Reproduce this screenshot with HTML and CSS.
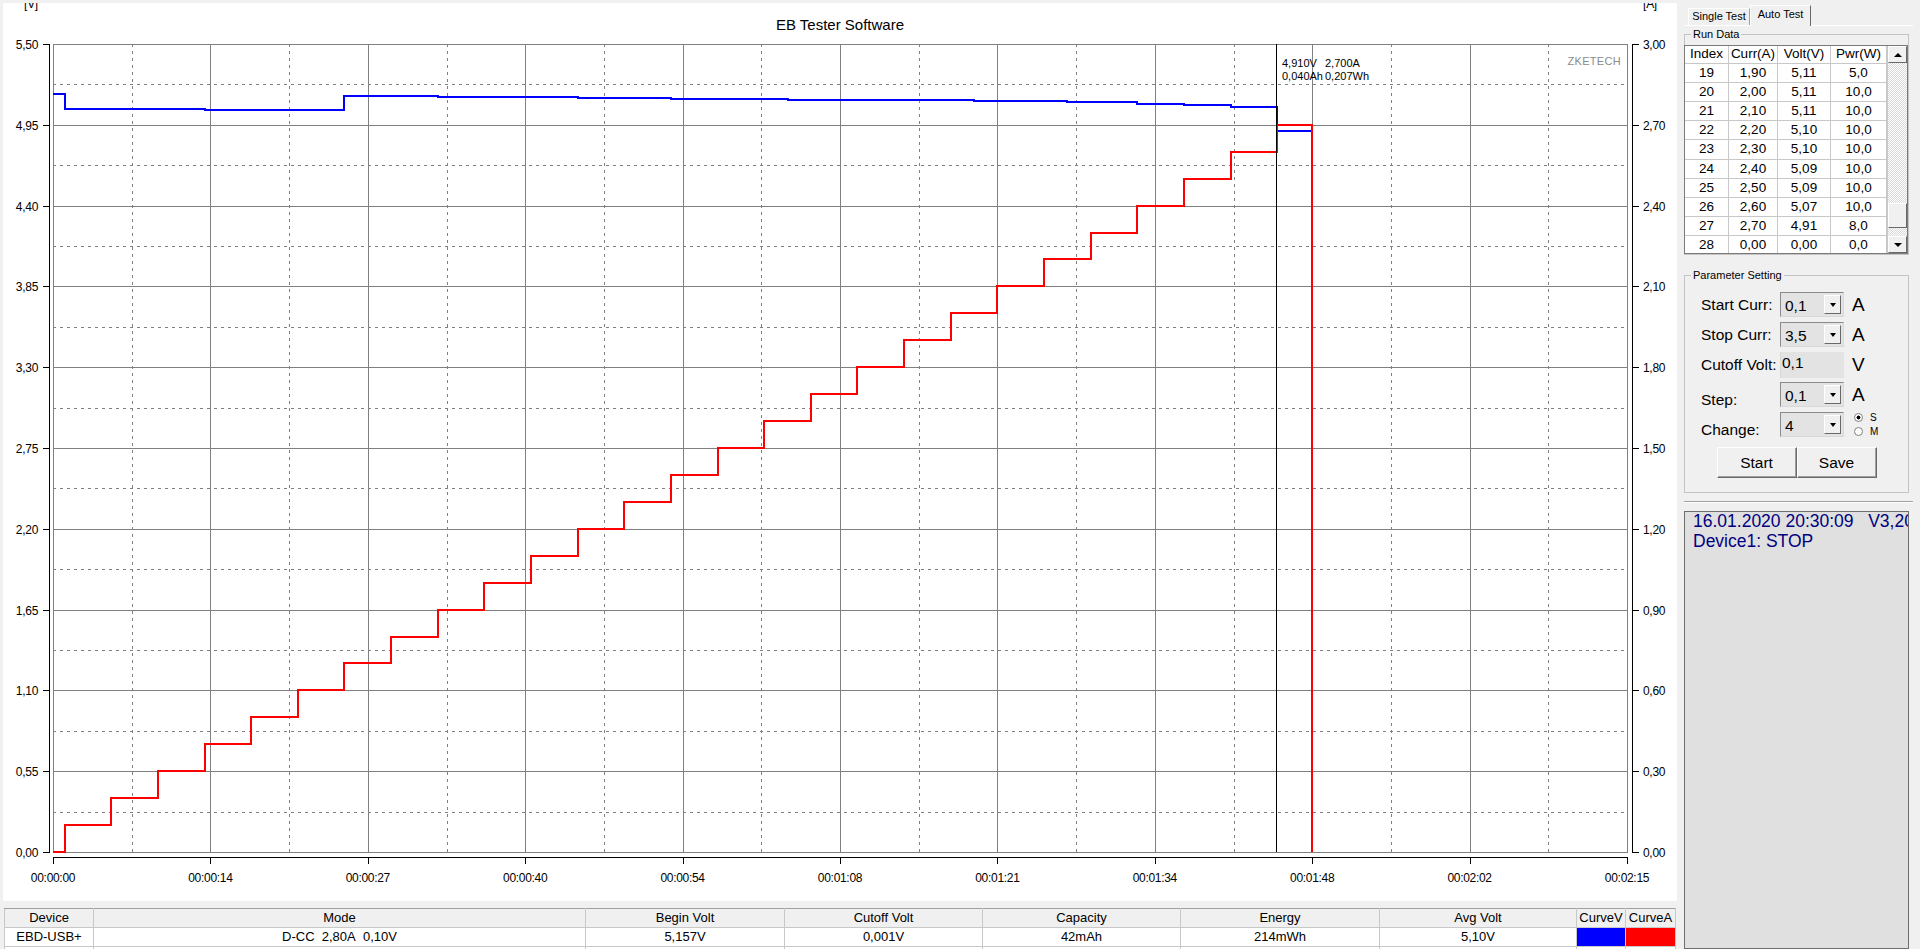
FILE: index.html
```html
<!doctype html>
<html>
<head>
<meta charset="utf-8">
<title>EB Tester Software</title>
<link rel="stylesheet" href="styles.css">
</head>
<body>
<div class="app">

  <!-- chart + summary -->
  <div class="main">
    <div class="chart">
      <svg id="plot" width="1674" height="898" viewBox="3 3 1674 898"></svg>
    </div>

    <table class="summary">
      <colgroup>
        <col style="width:89px"><col style="width:492px"><col style="width:199px">
        <col style="width:198px"><col style="width:198px"><col style="width:199px">
        <col style="width:197px"><col style="width:49px"><col style="width:50px">
      </colgroup>
      <tr>
        <th>Device</th><th>Mode</th><th>Begin Volt</th><th>Cutoff Volt</th><th>Capacity</th>
        <th>Energy</th><th>Avg Volt</th><th>CurveV</th><th>CurveA</th>
      </tr>
      <tr>
        <td>EBD-USB+</td><td>D-CC&nbsp; 2,80A&nbsp; 0,10V</td><td>5,157V</td><td>0,001V</td><td>42mAh</td>
        <td>214mWh</td><td>5,10V</td><td class="cv"></td><td class="ca"></td>
      </tr>
      <tr>
        <td></td><td></td><td></td><td></td><td></td><td></td><td></td><td></td><td></td>
      </tr>
    </table>
  </div>

  <!-- right hand panel -->
  <aside class="side">
    <div class="tabs">
      <span class="tab">Single Test</span>
      <span class="tab on">Auto Test</span>
    </div>

    <fieldset class="group run">
      <legend>Run Data</legend>
      <div class="datagrid">
        <table class="runtable">
          <colgroup><col style="width:44px"><col style="width:49px"><col style="width:53px"><col style="width:56px"></colgroup>
          <tr class="hd"><td>Index</td><td>Curr(A)</td><td>Volt(V)</td><td>Pwr(W)</td></tr>
          <tr><td>19</td><td>1,90</td><td>5,11</td><td>5,0</td></tr>
          <tr><td>20</td><td>2,00</td><td>5,11</td><td>10,0</td></tr>
          <tr><td>21</td><td>2,10</td><td>5,11</td><td>10,0</td></tr>
          <tr><td>22</td><td>2,20</td><td>5,10</td><td>10,0</td></tr>
          <tr><td>23</td><td>2,30</td><td>5,10</td><td>10,0</td></tr>
          <tr><td>24</td><td>2,40</td><td>5,09</td><td>10,0</td></tr>
          <tr><td>25</td><td>2,50</td><td>5,09</td><td>10,0</td></tr>
          <tr><td>26</td><td>2,60</td><td>5,07</td><td>10,0</td></tr>
          <tr><td>27</td><td>2,70</td><td>4,91</td><td>8,0</td></tr>
          <tr><td>28</td><td>0,00</td><td>0,00</td><td>0,0</td></tr>
        </table>
        <div class="vscroll">
          <div class="sbtn up"></div>
          <div class="track"><div class="thumb"></div></div>
          <div class="sbtn down"></div>
        </div>
      </div>
    </fieldset>

    <fieldset class="group params">
      <legend>Parameter Setting</legend>
      <div class="pbody">
        <div class="prow">
          <label>Start Curr:</label>
          <div class="combo"><span>0,1</span><i></i></div>
          <b class="unit">A</b>
        </div>
        <div class="prow">
          <label>Stop Curr:</label>
          <div class="combo"><span>3,5</span><i></i></div>
          <b class="unit">A</b>
        </div>
        <div class="prow">
          <label>Cutoff Volt:</label>
          <div class="field">0,1</div>
          <b class="unit">V</b>
        </div>
        <div class="prow">
          <label class="low">Step:</label>
          <div class="combo"><span>0,1</span><i></i></div>
          <b class="unit">A</b>
        </div>
        <div class="prow">
          <label class="low">Change:</label>
          <div class="combo"><span>4</span><i></i></div>
          <div class="radios">
            <span class="radio on"><i></i>S</span>
            <span class="radio"><i></i>M</span>
          </div>
        </div>
        <div class="btns">
          <button>Start</button><button>Save</button>
        </div>
      </div>
    </fieldset>

    <div class="sep"></div>

    <div class="status">
      <div>16.01.2020 20:30:09&nbsp;&nbsp;&nbsp;V3,20</div>
      <div>Device1: STOP</div>
    </div>
  </aside>
</div>

<script>
(() => {

  const svg  = document.getElementById("plot");
  const L = 53, R = 1627, T = 44, B = 852;      // plot frame
  const TMAX = 135;                             // seconds on x axis

  const X  = t => L + t / TMAX * (R - L);
  const YV = v => T + (5.5 - v) / 5.5 * (B - T);
  const YA = a => B - a / 3 * (B - T);
  const h  = n => Math.round(n) + 0.5;          // crisp 1px lines

  const vLab = ["5,50","4,95","4,40","3,85","3,30","2,75","2,20","1,65","1,10","0,55","0,00"];
  const aLab = ["3,00","2,70","2,40","2,10","1,80","1,50","1,20","0,90","0,60","0,30","0,00"];
  const tLab = ["00:00:00","00:00:14","00:00:27","00:00:40","00:00:54","00:01:08",
                "00:01:21","00:01:34","00:01:48","00:02:02","00:02:15"];

  let g = "";

  /* ---------- grid: 20 half steps, odd ones dashed ------------------ */
  for (let i = 1; i < 20; i++){
    const y = h(T + i * (B - T) / 20);
    const x = h(L + i * (R - L) / 20);
    const c = i % 2 ? "gd" : "gl";
    g += `<line class="${c}" x1="${L}" x2="${R}" y1="${y}" y2="${y}"/>`;
    g += `<line class="${c}" x1="${x}" x2="${x}" y1="${T}" y2="${B}"/>`;
  }
  g += `<rect class="gl" x="${L + .5}" y="${T + .5}" width="${R - L}" height="${B - T}"/>`;

  /* ---------- axes, ticks, labels ----------------------------------- */
  g += `<path class="axis" d="M49.5 ${T}V${B + 1}M1632.5 ${T}V${B + 1}M${L} 857.5H${R + 1}"/>`;
  for (let i = 0; i <= 10; i++){
    const y = T + i * (B - T) / 10;
    const x = L + i * (R - L) / 10;
    g += `<path class="axis" d="M43 ${h(y)}H50M1632 ${h(y)}H1639M${h(x)} 857V864"/>`;
    g += `<text class="lab" x="38" y="${Math.round(y) + 5}" text-anchor="end">${vLab[i]}</text>`;
    g += `<text class="lab" x="1643" y="${Math.round(y) + 5}">${aLab[i]}</text>`;
    g += `<text class="lab" x="${x}" y="882" text-anchor="middle">${tLab[i]}</text>`;
  }
  g += `<text class="lab" x="31" y="8" text-anchor="middle">[V]</text>`;
  g += `<text class="lab" x="1650" y="8" text-anchor="middle">[A]</text>`;
  g += `<text class="title" x="840" y="30" text-anchor="middle">EB Tester Software</text>`;
  g += `<text class="mark" x="1621" y="65" text-anchor="end">ZKETECH</text>`;

  /* ---------- measured curves --------------------------------------- */
  const END  = 108;
  const volt = [[0,5.157],[1,5.060],[13,5.053],[25,5.148],[33,5.141],[45,5.134],[53,5.128],
                [63,5.121],[73,5.117],[79,5.110],[87,5.103],[93,5.093],[97,5.086],
                [101,5.073],[105,4.910]];
  const amp  = [[0,0]];
  for (let k = 1; k <= 27; k++) amp.push([1 + 4 * (k - 1), k / 10]);

  function stepPath(pts, Y){
    let d = `M${Math.round(X(pts[0][0]))} ${Math.round(Y(pts[0][1]))}`;
    for (let i = 1; i < pts.length; i++)
      d += `H${Math.round(X(pts[i][0]))}V${Math.round(Y(pts[i][1]))}`;
    return d + `H${Math.round(X(END))}`;
  }

  g += `<path class="curv" d="${stepPath(volt, YV)}"/>`;
  g += `<path class="cura" d="${stepPath(amp, YA)}V${B}"/>`;

  /* ---------- cursor ------------------------------------------------- */
  const cx = Math.round(X(105)) - .5;
  g += `<line class="cursor" x1="${cx}" x2="${cx}" y1="${T}" y2="${B}"/>`;
  g += `<text class="info" x="1282" y="67">4,910V</text><text class="info" x="1325" y="67">2,700A</text>`;
  g += `<text class="info" x="1282" y="80">0,040Ah</text><text class="info" x="1325" y="80">0,207Wh</text>`;

  svg.innerHTML = g;

})();
</script>
</body>
</html>
```

FILE: styles.css
```css
/* ---------- page ---------- */
*{box-sizing:border-box}
html,body{margin:0;height:100%;overflow:hidden}
body{
  background:#f0f0f0;
  font:13px "Liberation Sans",Arial,sans-serif;
  color:#000;
}
.app{display:flex;width:1920px;height:949px}

/* ---------- left: chart + summary ---------- */
.main{width:1677px;padding:3px 0 0 3px}
.chart{height:898px;background:#fff}
.chart svg{display:block}

#plot line,#plot path,#plot rect{shape-rendering:crispEdges}
#plot text{font-family:"Liberation Sans",Arial,sans-serif}
.gl   {stroke:#808080;fill:none}
.gd   {stroke:#808080;stroke-dasharray:3 4}
.axis {stroke:#000;fill:none}
.curv {stroke:#0000ff;stroke-width:2;fill:none}
.cura {stroke:#ff0000;stroke-width:2;fill:none}
.cursor{stroke:#000}
.lab  {font-size:12px;letter-spacing:-.3px;fill:#000}
.title{font-size:15px;fill:#000}
.mark {font-size:11px;fill:#8a8a8a;letter-spacing:.3px}
.info {font-size:11px;fill:#000}

.summary{
  border-collapse:collapse;table-layout:fixed;
  width:1671px;margin:7px 0 0 1px;background:#fff;
}
.summary th,.summary td{
  border:1px solid #c8c8c8;padding:0;height:19px;
  line-height:18px;text-align:center;font-weight:normal;
  white-space:nowrap;overflow:hidden;
}
.summary th{background:#f0f0f0;border-top-color:#a0a0a0}
.summary .cv{background:#0000ff}
.summary .ca{background:#ff0000}

/* ---------- right panel ---------- */
.side{width:229px;margin-left:7px;display:flex;flex-direction:column}

.tabs{
  display:flex;align-items:flex-end;height:26px;
  padding-left:4px;border-bottom:1px solid #fff;
}
.tab{
  width:62px;height:17px;font-size:11px;line-height:14px;text-align:center;
  border:1px solid #fff;border-bottom:0;border-right-color:#a0a0a0;
}
.tab.on{
  width:61px;height:21px;margin-bottom:-1px;line-height:17px;
  background:#f0f0f0;border-right-color:#696969;
}

/* group boxes */
.group{
  margin:0;padding:0;width:225px;min-width:0;
  border:1px solid #c4c4c4;
}
.group legend{
  margin-left:6px;padding:0 2px;
  font-size:11px;line-height:12px;
}
.run{margin-top:2px}
.params{margin-top:14px}

/* run data grid */
.datagrid{
  display:flex;width:224px;height:209px;margin:5px 0 0 -1px;
  border:1px solid #7a7a7a;background:#fff;overflow:hidden;
}
.runtable{border-collapse:separate;border-spacing:0;table-layout:fixed;width:202px;align-self:flex-start}
.runtable td{
  padding:0;text-align:center;line-height:18.2px;font-size:13.5px;
  border-right:1px solid #c8c8c8;border-bottom:1px solid #c8c8c8;
  white-space:nowrap;
}
.runtable .hd td{line-height:16.5px}

.vscroll{width:20px;display:flex;flex-direction:column;border-left:1px solid #c8c8c8}
.sbtn{
  height:17px;display:flex;align-items:center;justify-content:center;
  background:#f0f0f0;border:1px solid;border-color:#fff #696969 #696969 #fff;
}
.sbtn::after{content:"";border:4px solid transparent}
.sbtn.up::after  {border-bottom:4px solid #000;border-top:0}
.sbtn.down::after{border-top:4px solid #000;border-bottom:0}
.track{
  flex:1;display:flex;flex-direction:column;justify-content:flex-end;padding-bottom:8px;
  background:repeating-conic-gradient(#fff 0 25%,#d8d8d8 0 50%) 0 0/2px 2px;
}
.thumb{height:25px;background:#f0f0f0;border:1px solid;border-color:#fff #696969 #696969 #fff}

/* parameter setting */
.pbody{padding:11px 0 14px 16px}
.prow{display:flex;align-items:center;height:25px;margin-bottom:5px}
.prow label{width:79px;font-size:15.5px;white-space:nowrap}
.prow label.low{padding-top:11px}

.combo{
  display:flex;width:64px;height:25px;padding:2px;background:#e3e3e3;
  border:1px solid;border-color:#8a8a8a #d8d8d8 #d8d8d8 #8a8a8a;
}
.combo span{flex:1;font-size:15.5px;line-height:21px;padding-left:2px}
.combo i{
  width:17px;display:flex;align-items:center;justify-content:center;
  background:#f0f0f0;border:1px solid;border-color:#fff #696969 #696969 #fff;
}
.combo i::after{content:"";border:3px solid transparent;border-top:4px solid #000;border-bottom:0}

.field{
  width:64px;height:26px;padding-left:1px;background:#e3e3e3;
  font-size:15.5px;line-height:22px;border-left:1px solid #d8d8d8;
}
.unit{margin-left:8px;font-size:19px;font-weight:normal}

.radios{display:flex;flex-direction:column;margin-left:10px;font-size:10px;line-height:14px}
.radio{display:flex;align-items:center;gap:7px}
.radio i{width:9px;height:9px;border-radius:50%;border:1px solid #808080;background:#fff}
.radio.on i{background:radial-gradient(circle,#000 0 1.8px,#fff 2.2px)}

.btns{display:flex;justify-content:center;margin:10px 0 0 -16px}
.btns button{
  width:80px;height:31px;padding:0;
  font:15.5px "Liberation Sans",Arial,sans-serif;color:#000;
  background:#f0f0f0;border:1px solid;border-color:#fff #696969 #696969 #fff;
  box-shadow:inset -1px -1px #a0a0a0;
}

.sep{margin-top:8px;height:2px;border-top:1px solid #a0a0a0;border-bottom:1px solid #fff}

.status{
  flex:1;margin-top:8px;width:225px;padding-left:8px;
  background:#e0e0e0;border:1px solid #6e6e6e;
  color:#000080;font-size:17.5px;line-height:19.5px;
  white-space:nowrap;overflow:hidden;
}
```
